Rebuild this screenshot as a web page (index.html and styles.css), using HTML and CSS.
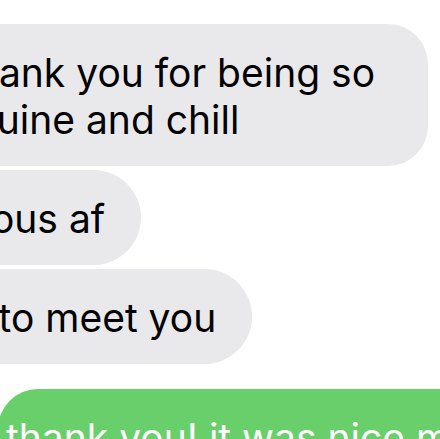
FILE: index.html
```html
<!DOCTYPE html>
<html>
<head>
    <title>Messages</title>
    <link rel="stylesheet" href="styles.css">
</head>
<body>
    <div class="thread">
        <div class="msg in"><div class="bubble wide">&amp; thank you for being so genuine and chill</div></div>
        <div class="msg in"><div class="bubble">jealous af</div></div>
        <div class="msg in"><div class="bubble">fun to meet you</div></div>
        <div class="msg out"><div class="bubble">thank you! it was nice meeting you too</div></div>
    </div>
</body>
</html>
```

FILE: styles.css
```css
html {
    height: 100%;
    background-color: #fff;
    padding: 0;
    margin: 0;
}

body {
    height: 100%;
    overflow: hidden;
    padding: 0;
    margin: 0;
    font-family: Inter, "Liberation Sans", sans-serif;
}

.thread {
    display: flex;
    flex-direction: column;
    gap: 4px;
    padding-top: 24px;
    margin-left: -103px;
    width: 900px;
}

.msg {
    display: flex;
}

    .msg.out {
        margin-top: 21px;
        margin-left: 101px;
    }

.bubble {
    background-color: #e9e9eb;
    color: #000;
    font-size: 39px;
    line-height: 47px;
    padding: 25px 36px 23px 30px;
    border-radius: 48px;
}

    .bubble.wide {
        width: 465px;
        border-radius: 40px;
    }

.out .bubble {
    background-color: #68cf6b;
    color: #fff;
    white-space: nowrap;
    padding-left: 8px;
    border-radius: 40px;
}
```
